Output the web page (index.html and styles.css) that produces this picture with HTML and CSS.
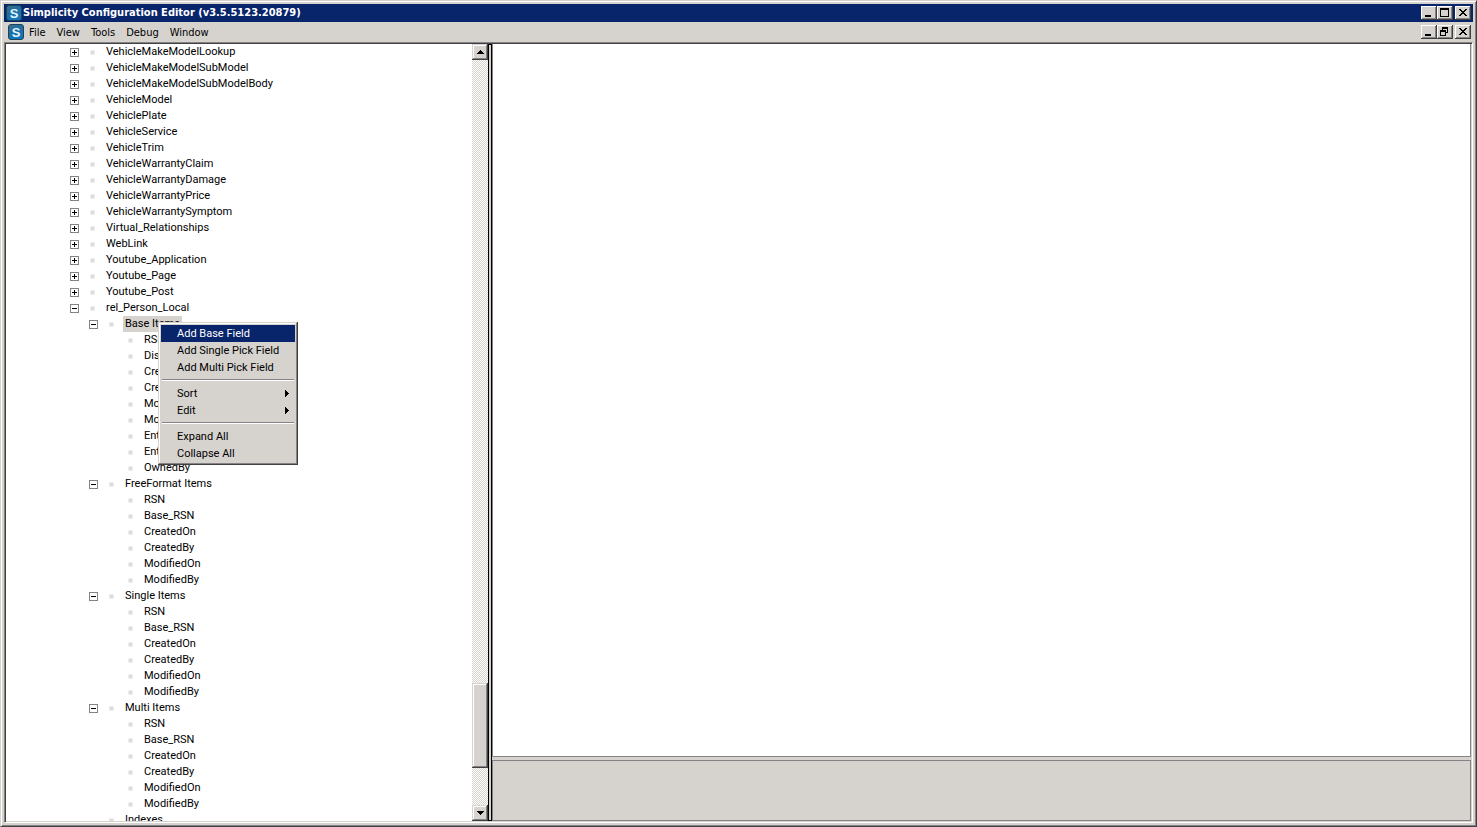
FILE: index.html
```
<!DOCTYPE html>
<html lang="en">
<head>
<meta charset="utf-8">
<title>Simplicity Configuration Editor</title>
<link rel="stylesheet" href="styles.css">
<script src="tree.js" defer></script>
</head>
<body>
<svg class="defs" width="0" height="0" aria-hidden="true">
  <defs>
    <linearGradient id="tile" x1="0" y1="0" x2="0.6" y2="1">
      <stop offset="0" stop-color="#3f6f86"/>
      <stop offset="0.5" stop-color="#1c6ea4"/>
      <stop offset="1" stop-color="#0f78c0"/>
    </linearGradient>
    <symbol id="logo" viewBox="0 0 16 16">
      <rect x="0.5" y="0.5" width="15" height="15" rx="2.5" fill="url(#tile)" stroke="#1f4456"/>
      <text x="8" y="12.5" text-anchor="middle" class="logo-letter">S</text>
    </symbol>
    <symbol id="minimize" viewBox="0 0 16 14"><path d="M4 9h6v2H4z"/></symbol>
    <symbol id="maximize" viewBox="0 0 16 14"><path fill-rule="evenodd" d="M3 2h9v9H3zM4 4v6h7V4z"/></symbol>
    <symbol id="restore" viewBox="0 0 16 14"><path fill-rule="evenodd" d="M5 2h6v6H9V7h1V4H6v1H5zM3 5h6v6H3zM4 7v3h4V7z"/></symbol>
    <symbol id="close" viewBox="0 0 16 14"><path d="M4 3h2v1h1v1h2V4h1V3h2v1h-1v1h-1v1H9v1h1v1h1v1h1v1h-2V9H9V8H7v1H6v1H4V9h1V8h1V7h1V6H6V5H5V4H4z"/></symbol>
  </defs>
</svg>
<div class="window">
  <header class="titlebar">
    <svg class="logo"><use href="#logo"/></svg>
    <h1 class="title">Simplicity Configuration Editor (v3.5.5123.20879)</h1>
    <div class="controls">
      <button class="control" aria-label="Minimize"><svg><use href="#minimize"/></svg></button>
      <button class="control" aria-label="Maximize"><svg><use href="#maximize"/></svg></button>
      <button class="control control-close" aria-label="Close"><svg><use href="#close"/></svg></button>
    </div>
  </header>
  <nav class="menubar">
    <svg class="logo"><use href="#logo"/></svg>
    <button class="menu">File</button>
    <button class="menu">View</button>
    <button class="menu">Tools</button>
    <button class="menu">Debug</button>
    <button class="menu">Window</button>
    <div class="controls">
      <button class="control" aria-label="Minimize document"><svg><use href="#minimize"/></svg></button>
      <button class="control" aria-label="Restore document"><svg><use href="#restore"/></svg></button>
      <button class="control control-close" aria-label="Close document"><svg><use href="#close"/></svg></button>
    </div>
  </nav>
  <main class="workspace">
    <section class="tree-pane">
      <ul class="tree" id="tree"></ul>
      <div class="scrollbar">
        <button class="scroll-button" aria-label="Scroll up"><svg viewBox="0 0 7 4"><path d="M3 0h1v1h1v1h1v1h1v1H0V3h1V2h1V1h1z"/></svg></button>
        <div class="track"><div class="thumb"></div></div>
        <button class="scroll-button" aria-label="Scroll down"><svg viewBox="0 0 7 4"><path d="M0 0h7v1H6v1H5v1H4v1H3V3H2V2H1V1H0z"/></svg></button>
      </div>
    </section>
    <div class="splitter"></div>
    <section class="detail">
      <div class="editor"></div>
      <div class="status"></div>
    </section>
  </main>
</div>
<div class="context-menu" role="menu">
  <button class="item item-active" role="menuitem">Add Base Field</button>
  <button class="item" role="menuitem">Add Single Pick Field</button>
  <button class="item" role="menuitem">Add Multi Pick Field</button>
  <hr class="separator">
  <button class="item" role="menuitem">Sort<svg class="arrow" viewBox="0 0 4 7"><path d="M0 0h1v1h1v1h1v1h1v1H3v1H2v1H1v1H0z"/></svg></button>
  <button class="item" role="menuitem">Edit<svg class="arrow" viewBox="0 0 4 7"><path d="M0 0h1v1h1v1h1v1h1v1H3v1H2v1H1v1H0z"/></svg></button>
  <hr class="separator">
  <button class="item" role="menuitem">Expand All</button>
  <button class="item" role="menuitem">Collapse All</button>
</div>
</body>
</html>
```
FILE: styles.css
```
* { box-sizing: border-box; }

body {
  margin: 0;
  height: 100vh;
  overflow: hidden;
  background: #d6d3ce;
  color: #000;
  font: 11px/16px Roboto, "Liberation Sans", sans-serif;
}

button {
  margin: 0;
  padding: 0;
  border: 0;
  border-radius: 0;
  background: none;
  color: inherit;
  font: inherit;
}

svg { display: block; shape-rendering: crispEdges; }

.defs { position: absolute; }

.window {
  height: 100%;
  display: flex;
  flex-direction: column;
  padding: 2px;
  border: 1px solid #d6d3ce;
  border-right-color: #424142;
  border-bottom-color: #424142;
  box-shadow: inset 1px 1px #fff, inset -1px -1px #848284;
}

.titlebar, .menubar {
  display: flex;
  align-items: center;
  flex: none;
  margin: 0 1px;
  font-family: "DejaVu Sans Condensed", "DejaVu Sans", sans-serif;
}

.titlebar {
  height: 18px;
  margin-top: 1px;
  padding: 0 2px;
  background: #08246b;
  color: #fff;
}

.menubar { height: 20px; padding: 0 2px 0 4px; font-size: 11px; }

.logo { width: 16px; height: 16px; flex: none; shape-rendering: auto; }

.logo-letter { font: bold 13px "Liberation Sans", sans-serif; fill: #e4f5fb; }

.title { margin: 0 0 0 1px; font-size: 11px; line-height: 18px; font-weight: bold; white-space: nowrap; }

.menubar .logo { margin-right: 1px; }

.menu { padding: 1px 4px 0; margin-right: 3px; line-height: 17px; }

.controls { display: flex; margin-left: auto; }

.control {
  width: 16px;
  height: 14px;
  background: #d6d3ce;
  box-shadow: inset -1px -1px #424142, inset 1px 1px #fff, inset -2px -2px #848284;
}

.control svg { width: 16px; height: 14px; }

.control-close { margin-left: 2px; }

.workspace {
  flex: 1;
  min-height: 0;
  display: grid;
  grid-template-columns: 482px 4px 1fr;
  margin: 0 1px 1px;
  border: 1px solid #d6d3ce;
  border-top: 1px solid #848284;
  border-left: 1px solid #848284;
  border-right: 1px solid #fff;
  border-bottom: 1px solid #fff;
  padding: 1px;
  box-shadow: inset 1px 1px #424142;
}

.tree-pane { display: flex; min-height: 0; background: #fff; }

.tree { flex: 1; overflow: hidden; padding-left: 64px; }

.tree, .branch { margin: 0; list-style: none; }

.branch { padding-left: 19px; }

.node { display: flex; align-items: center; height: 16px; }

.toggle {
  width: 9px;
  height: 9px;
  border: 1px solid #848284;
  background:
    linear-gradient(#000, #000) center / 5px 1px no-repeat,
    #fff;
}

.toggle-closed {
  background:
    linear-gradient(#000, #000) center / 5px 1px no-repeat,
    linear-gradient(#000, #000) center / 1px 5px no-repeat,
    #fff;
}

.toggle-none { visibility: hidden; }

.bullet {
  width: 5px;
  height: 5px;
  margin: 0 9px 0 11px;
  border: 1px solid #efebef;
  border-radius: 1px;
  background: #dedbde;
}

.label { padding: 0 2px; white-space: nowrap; }

.label-selected { background: #d6d3ce; }

.scrollbar { width: 16px; flex: none; display: flex; flex-direction: column; }

.scroll-button {
  width: 16px;
  height: 16px;
  flex: none;
  display: grid;
  place-items: center;
  background: #d6d3ce;
  box-shadow: inset -1px -1px #424142, inset 1px 1px #d6d3ce, inset -2px -2px #848284, inset 2px 2px #fff;
}

.scroll-button svg { width: 7px; height: 4px; }

.track {
  flex: 1;
  display: flex;
  flex-direction: column;
  background: repeating-conic-gradient(#d6d3ce 0 25%, #fff 0 50%) 0 0 / 2px 2px;
}

.track::before { content: ""; flex: 623; }

.track::after { content: ""; flex: 37; }

.thumb {
  flex: 85;
  background: #d6d3ce;
  box-shadow: inset -1px -1px #424142, inset 1px 1px #d6d3ce, inset -2px -2px #848284, inset 2px 2px #fff;
}

.splitter { border: 1px solid #000; background: #d6d3ce; }

.detail { display: flex; flex-direction: column; gap: 3px; min-width: 0; }

.editor {
  flex: 1;
  background: #fff;
  border: 1px solid #848284;
  border-top: 0;
}

.status { height: 61px; border: 1px solid #848284; }

.context-menu {
  position: absolute;
  left: 158px;
  top: 322px;
  width: 140px;
  padding: 3px;
  background: #d6d3ce;
  box-shadow: inset -1px -1px #424142, inset 1px 1px #d6d3ce, inset -2px -2px #848284, inset 2px 2px #fff;
}

.item {
  display: flex;
  align-items: center;
  justify-content: space-between;
  width: 100%;
  height: 17px;
  padding: 0 6px 0 16px;
  white-space: nowrap;
}

.item-active { background: #08246b; color: #fff; }

.arrow { width: 4px; height: 7px; }

.separator {
  height: 2px;
  margin: 3px 1px 4px;
  border: 0;
  border-top: 1px solid #848284;
  border-bottom: 1px solid #fff;
}
```
FILE: tree.js
```
const audit = ["CreatedOn", "CreatedBy", "ModifiedOn", "ModifiedBy"];
const leaf = (label) => ({ label });
const closed = (label) => ({ label, closed: true });
const group = (label, names) => ({ label, children: names.map(leaf) });

const nodes = [
  ...[
    "VehicleMakeModelLookup", "VehicleMakeModelSubModel", "VehicleMakeModelSubModelBody",
    "VehicleModel", "VehiclePlate", "VehicleService", "VehicleTrim",
    "VehicleWarrantyClaim", "VehicleWarrantyDamage", "VehicleWarrantyPrice",
    "VehicleWarrantySymptom", "Virtual_Relationships", "WebLink",
    "Youtube_Application", "Youtube_Page", "Youtube_Post"
  ].map(closed),
  {
    label: "rel_Person_Local",
    children: [
      {
        ...group("Base Items", ["RSN", "Display", ...audit, "EnteredOn", "EnteredBy", "OwnedBy"]),
        selected: true
      },
      group("FreeFormat Items", ["RSN", "Base_RSN", ...audit]),
      group("Single Items", ["RSN", "Base_RSN", ...audit]),
      group("Multi Items", ["RSN", "Base_RSN", ...audit]),
      leaf("Indexes")
    ]
  }
];

function element(tag, className) {
  const el = document.createElement(tag);
  el.className = className;
  return el;
}

function render(list, parent) {
  for (const node of list) {
    const li = document.createElement("li");
    const row = element("div", "node");
    const state = node.closed ? " toggle-closed" : node.children ? "" : " toggle-none";
    const toggle = element("button", "toggle" + state);
    toggle.setAttribute("aria-label", (node.closed ? "Expand " : "Collapse ") + node.label);
    const label = element("span", "label" + (node.selected ? " label-selected" : ""));
    label.textContent = node.label;
    row.append(toggle, element("span", "bullet"), label);
    li.append(row);
    if (node.children) {
      const branch = element("ul", "branch");
      render(node.children, branch);
      li.append(branch);
    }
    parent.append(li);
  }
}

render(nodes, document.getElementById("tree"));
```
